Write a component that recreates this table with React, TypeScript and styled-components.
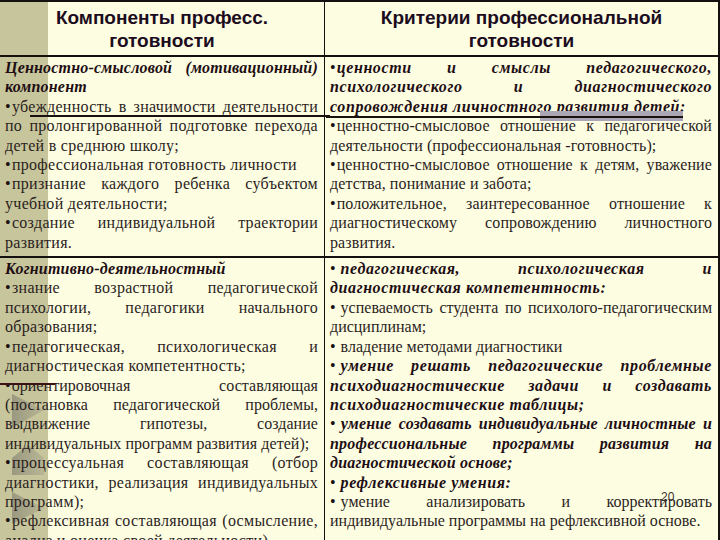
import React from 'react'
import styled, { createGlobalStyle } from 'styled-components'

const GlobalStyle = createGlobalStyle`
  html, body {
    margin: 0;
    padding: 0;
  }
  body {
    background: #fdfde2;
  }
`

const Slide = styled.div`
  position: relative;
  width: 720px;
  height: 540px;
  overflow: hidden;
  background: linear-gradient(to right, #c6c59b 0, #c6c59b 48px, #fdfde2 48px);
  font-family: 'Liberation Serif', 'Times New Roman', serif;
`

const Table = styled.div`
  position: relative;
  z-index: 1;
  display: grid;
  grid-template-columns: 325px 1fr;
  border-top: 2px solid #141010;
  border-right: 2px solid #141010;
`

const HeadCell = styled.div<{ $first?: boolean }>`
  height: 53px;
  display: flex;
  align-items: center;
  justify-content: center;
  text-align: center;
  font-family: 'Liberation Sans', Arial, sans-serif;
  font-weight: bold;
  font-size: 19px;
  line-height: 23px;
  color: #1c0c20;
  border-bottom: 2px solid #141010;
  border-right: ${p => (p.$first ? '1px solid #141010' : 'none')};
`

const Cell = styled.div<{ $first?: boolean; $spacing: number; $emSpacing: number }>`
  padding: 1px 6px 4px 5px;
  border-bottom: 2px solid #141010;
  border-right: ${p => (p.$first ? '1px solid #141010' : 'none')};
  letter-spacing: ${p => p.$spacing}px;

  em {
    font-weight: bold;
    font-style: italic;
    letter-spacing: ${p => p.$emSpacing}px;
    color: #1e0e14;
  }
`

// $ls tightens one paragraph so that it breaks where the slide does
const Item = styled.p<{ $ls?: number }>`
  margin: 0;
  font-size: 16px;
  line-height: 19.4px;
  color: #2b1d1d;
  text-align: justify;
  ${p =>
    p.$ls !== undefined &&
    `
    letter-spacing: ${p.$ls}px;
    em { letter-spacing: ${p.$ls}px; }
  `}
`

const Dot = styled.span<{ $gap?: boolean }>`
  margin-right: ${p => (p.$gap ? '5px' : '1px')};
  color: #1a1010;
`

const Rule = styled.div<{ $top: number; $left: number; $width: number; $color?: string; $h?: number }>`
  position: absolute;
  z-index: 2;
  top: ${p => p.$top}px;
  left: ${p => p.$left}px;
  width: ${p => p.$width}px;
  height: ${p => p.$h ?? 2}px;
  background: ${p => p.$color ?? '#1a1010'};
`

const Deco = styled.svg`
  position: absolute;
  z-index: 0;
  left: 0;
  top: 380px;
  width: 48px;
  height: 160px;
`

const PageNum = styled.span`
  position: absolute;
  z-index: 2;
  left: 661px;
  top: 490px;
  font-family: 'Liberation Sans', Arial, sans-serif;
  font-size: 12px;
  color: #3a3030;
`

const App: React.FC = () => {
  return (
    <Slide>
      <GlobalStyle />
      <Deco viewBox="0 0 48 160">
        <defs>
          <linearGradient id="tri" x1="0" y1="0" x2="1" y2="0">
            <stop offset="0" stopColor="#9a9980" />
            <stop offset="1" stopColor="#b8b694" />
          </linearGradient>
        </defs>
        <polygon points="12,14 44,30 12,48" fill="url(#tri)" />
        <polygon points="28,65 44,78 44,95 12,95 12,78" fill="url(#tri)" />
        <polygon points="12,112 44,128 12,144" fill="url(#tri)" />
      </Deco>

      <Table>
        <HeadCell $first>
          Компоненты професс.
          <br />
          готовности
        </HeadCell>
        <HeadCell>
          Критерии профессиональной
          <br />
          готовности
        </HeadCell>

        <Cell $first $spacing={0.3} $emSpacing={0.2}>
          <Item>
            <em>Ценностно-смысловой (мотивационный) компонент</em>
          </Item>
          <Item>
            <Dot>•</Dot>убежденность в значимости деятельности по пролонгированной подготовке перехода детей в среднюю школу;
          </Item>
          <Item>
            <Dot>•</Dot>профессиональная готовность личности
          </Item>
          <Item>
            <Dot>•</Dot>признание каждого ребенка субъектом учебной деятельности;
          </Item>
          <Item>
            <Dot>•</Dot>создание индивидуальной траектории развития.
          </Item>
        </Cell>
        <Cell $spacing={0.1} $emSpacing={0.6}>
          <Item>
            <Dot>•</Dot>
            <em>ценности и смыслы педагогического, психологического и диагностического сопровождения личностного развития детей:</em>
          </Item>
          <Item>
            <Dot>•</Dot>ценностно-смысловое отношение к педагогической деятельности (профессиональная -готовность);
          </Item>
          <Item>
            <Dot>•</Dot>ценностно-смысловое отношение к детям, уважение детства, понимание и забота;
          </Item>
          <Item>
            <Dot>•</Dot>положительное, заинтересованное отношение к диагностическому сопровождению личностного развития.
          </Item>
        </Cell>

        <Cell $first $spacing={0.3} $emSpacing={0.2}>
          <Item>
            <em>Когнитивно-деятельностный</em>
          </Item>
          <Item>
            <Dot>•</Dot>знание возрастной педагогической психологии, педагогики начального образования;
          </Item>
          <Item>
            <Dot>•</Dot>педагогическая, психологическая и диагностическая компетентность;
          </Item>
          <Item $ls={0.05}>
            <Dot>•</Dot>ориентировочная составляющая (постановка педагогической проблемы, выдвижение гипотезы, создание индивидуальных программ развития детей);
          </Item>
          <Item>
            <Dot>•</Dot>процессуальная составляющая (отбор диагностики, реализация индивидуальных программ);
          </Item>
          <Item>
            <Dot>•</Dot>рефлексивная составляющая (осмысление, анализ и оценка своей деятельности).
          </Item>
        </Cell>
        <Cell $spacing={0} $emSpacing={0.6}>
          <Item>
            <Dot $gap>•</Dot>
            <em>педагогическая, психологическая и диагностическая компетентность:</em>
          </Item>
          <Item>
            <Dot $gap>•</Dot>успеваемость студента по психолого-педагогическим дисциплинам;
          </Item>
          <Item>
            <Dot $gap>•</Dot>владение методами диагностики
          </Item>
          <Item>
            <Dot $gap>•</Dot>
            <em>умение решать педагогические проблемные психодиагностические задачи и создавать психодиагностические таблицы;</em>
          </Item>
          <Item $ls={0.2}>
            <Dot $gap>•</Dot>
            <em>умение создавать индивидуальные личностные и профессиональные программы развития на диагностической основе;</em>
          </Item>
          <Item>
            <Dot $gap>•</Dot>
            <em>рефлексивные умения:</em>
          </Item>
          <Item>
            <Dot $gap>•</Dot>умение анализировать и корректировать индивидуальные программы на рефлексивной основе.
          </Item>
        </Cell>
      </Table>

      <Rule $top={115} $left={30} $width={300} />
      <Rule $top={111} $left={540} $width={143} $h={10} $color="#aaa6b6" />
      <Rule $top={116} $left={326} $width={357} />
      <Rule $top={383} $left={0} $width={55} $color="#3a1414" />

      <PageNum>20</PageNum>
    </Slide>
  )
}

export default App
